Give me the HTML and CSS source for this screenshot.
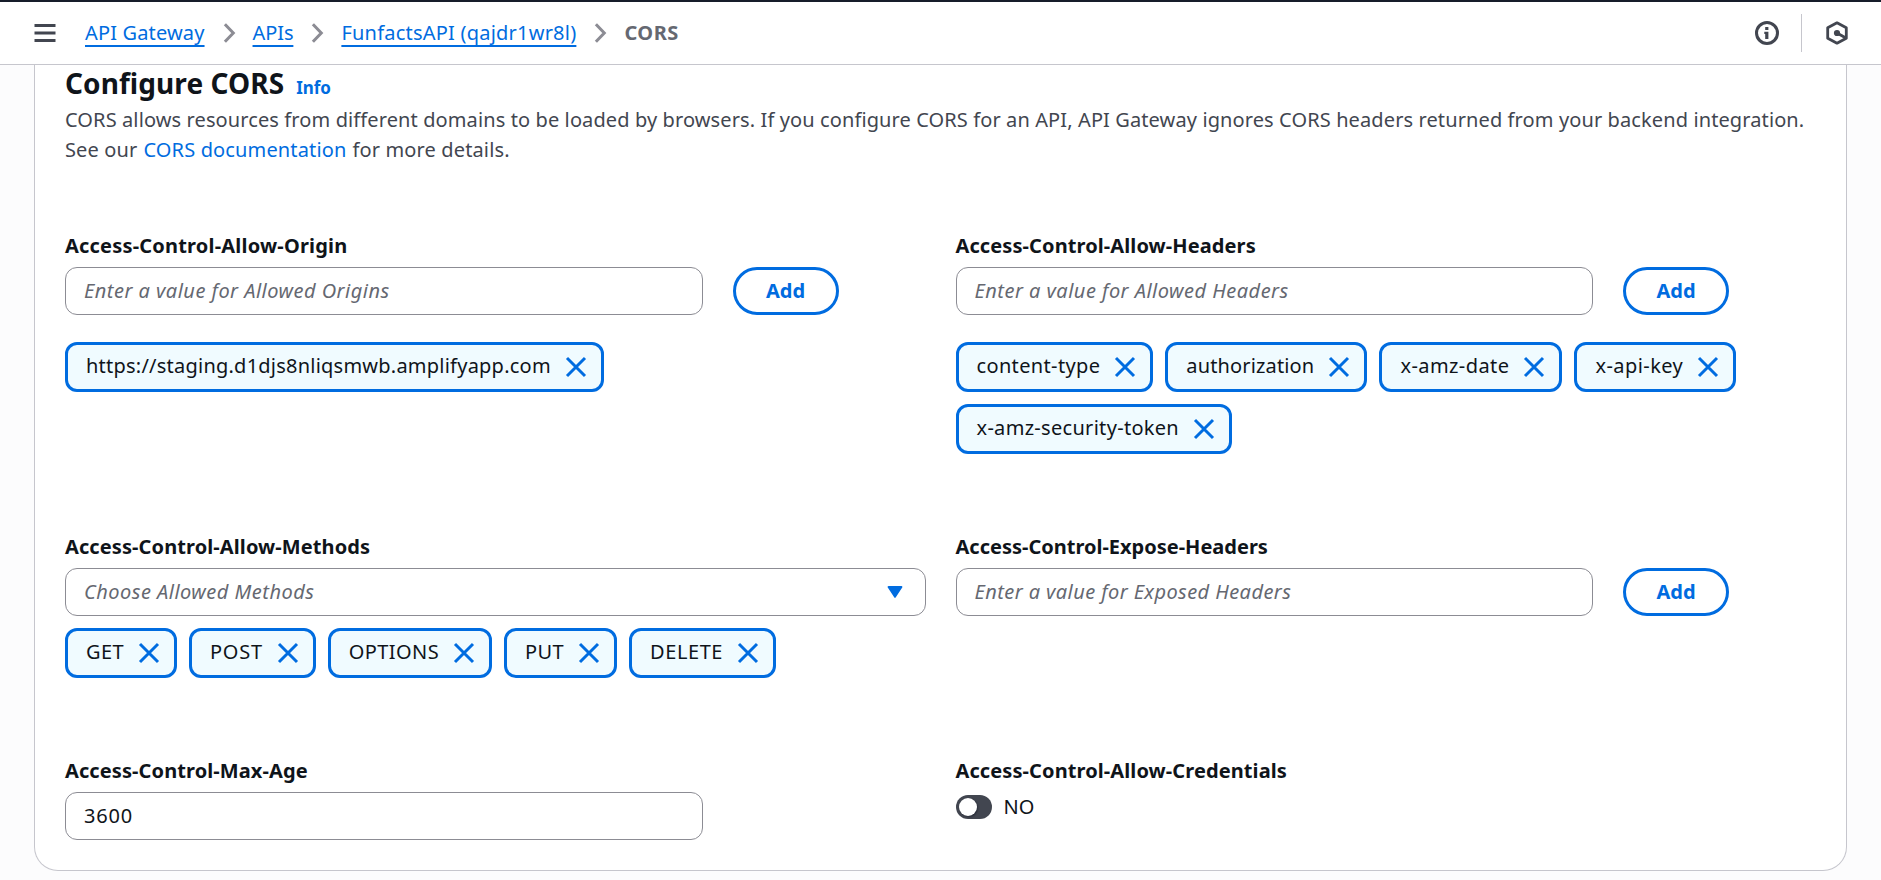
FILE: index.html
```html
<!DOCTYPE html>
<html lang="en">
<head>
<meta charset="utf-8">
<title>CORS - API Gateway</title>
<link rel="stylesheet" href="styles.css">
</head>
<body>
<svg class="sprite" aria-hidden="true">
  <symbol id="close" viewBox="0 0 24 24"><path d="M3 3l18 18M21 3L3 21" fill="none" stroke="currentColor" stroke-width="3"/></symbol>
  <symbol id="chevron" viewBox="0 0 24 24"><path d="M7.9 3.2L16.3 12L7.9 20.8" fill="none" stroke="currentColor" stroke-width="3"/></symbol>
</svg>

<header class="topbar">
  <button class="menu" aria-label="Open navigation">
    <svg class="icon" viewBox="0 0 24 24"><path d="M1.5 4.5h21M1.5 12h21M1.5 19.5h21" stroke="currentColor" stroke-width="3"/></svg>
  </button>
  <nav class="crumbs">
    <a class="crumb crumb-service" href="#">API Gateway</a>
    <svg class="icon sep"><use href="#chevron"/></svg>
    <a class="crumb crumb-list" href="#">APIs</a>
    <svg class="icon sep"><use href="#chevron"/></svg>
    <a class="crumb crumb-api" href="#">FunfactsAPI (qajdr1wr8l)</a>
    <svg class="icon sep"><use href="#chevron"/></svg>
    <span class="crumb-current">CORS</span>
  </nav>
  <div class="tools">
    <svg class="icon" viewBox="0 0 24 24"><circle cx="12" cy="12" r="10.5" fill="none" stroke="currentColor" stroke-width="3"/><path d="M10.2 6h3.2v3h-3.2zM9.3 10.8h4.1V18h-3.2v-5h-.9z" fill="currentColor"/></svg>
    <span class="divider"></span>
    <svg class="icon" viewBox="0 0 24 24"><path d="M12 1.8L21.3 6.8v10.4L12 22.2L2.7 17.2V6.8z" fill="none" stroke="currentColor" stroke-width="2.8" stroke-linejoin="round"/><circle cx="12" cy="12" r="3.1" fill="currentColor"/><path d="M12 12l8.5 4.8" stroke="currentColor" stroke-width="2.8"/></svg>
  </div>
</header>

<main class="card">
  <div class="heading"><h1>Configure CORS</h1><a class="info" href="#">Info</a></div>
  <div class="lead">
    <p>CORS allows resources from different domains to be loaded by browsers. If you configure CORS for an API, API Gateway ignores CORS headers returned from your backend integration.</p>
    <p class="more"><span>See our</span><a href="#">CORS documentation</a><span>for more details.</span></p>
  </div>

  <div class="grid">
    <section>
      <h2 class="l-origin">Access-Control-Allow-Origin</h2>
      <div class="row"><div class="field hint">Enter a value for Allowed Origins</div><button class="add">Add</button></div>
      <div class="tags origins">
        <div class="tag"><span>https://staging.d1djs8nliqsmwb.amplifyapp.com</span><svg class="icon"><use href="#close"/></svg></div>
      </div>
    </section>
    <section>
      <h2>Access-Control-Allow-Headers</h2>
      <div class="row"><div class="field hint">Enter a value for Allowed Headers</div><button class="add">Add</button></div>
      <div class="tags headers">
        <div class="tag"><span>content-type</span><svg class="icon"><use href="#close"/></svg></div>
        <div class="tag"><span>authorization</span><svg class="icon"><use href="#close"/></svg></div>
        <div class="tag"><span>x-amz-date</span><svg class="icon"><use href="#close"/></svg></div>
        <div class="tag"><span>x-api-key</span><svg class="icon"><use href="#close"/></svg></div>
        <div class="tag"><span>x-amz-security-token</span><svg class="icon"><use href="#close"/></svg></div>
      </div>
    </section>
    <section>
      <h2>Access-Control-Allow-Methods</h2>
      <div class="field select hint"><span>Choose Allowed Methods</span><svg class="caret" viewBox="0 0 16 12"><path d="M1.6 1h12.8L8 10.8z" fill="currentColor" stroke="currentColor" stroke-width="2" stroke-linejoin="round"/></svg></div>
      <div class="tags methods">
        <div class="tag"><span>GET</span><svg class="icon"><use href="#close"/></svg></div>
        <div class="tag"><span>POST</span><svg class="icon"><use href="#close"/></svg></div>
        <div class="tag"><span>OPTIONS</span><svg class="icon"><use href="#close"/></svg></div>
        <div class="tag"><span>PUT</span><svg class="icon"><use href="#close"/></svg></div>
        <div class="tag"><span>DELETE</span><svg class="icon"><use href="#close"/></svg></div>
      </div>
    </section>
    <section>
      <h2 class="l-expose">Access-Control-Expose-Headers</h2>
      <div class="row"><div class="field hint hint-expose">Enter a value for Exposed Headers</div><button class="add">Add</button></div>
    </section>
    <section>
      <h2>Access-Control-Max-Age</h2>
      <div class="field value">3600</div>
    </section>
    <section>
      <h2>Access-Control-Allow-Credentials</h2>
      <div class="toggle"><span class="track"><span class="knob"></span></span><span class="state">NO</span></div>
    </section>
  </div>
</main>
</body>
</html>
```

FILE: styles.css
```css
* { box-sizing: border-box; margin: 0; padding: 0; }

body {
  height: 880px;
  overflow: hidden;
  background: #fcfcfd;
  color: #0f141a;
  font: 20px/30px "Noto Sans", "Open Sans", sans-serif;
}

a { color: #006ce0; text-decoration: none; }
button { font: inherit; background: none; border: 0; }
.sprite { display: none; }
.icon { display: block; width: 24px; height: 24px; flex: none; }

.topbar {
  display: flex;
  align-items: center;
  height: 65px;
  padding: 0 32px 1px 33px;
  border-top: 2px solid #161d2a;
  border-bottom: 1px solid #c6c6cd;
  background: #fff;
}
.menu { margin-right: 28px; color: #424650; }
.crumbs { display: flex; align-items: center; gap: 12px; white-space: nowrap; }
.crumb {
  text-decoration: underline 2px;
  text-underline-offset: 5px;
  text-decoration-skip-ink: none;
}
.crumb-service { letter-spacing: 0.15px; }
.crumb-list { letter-spacing: -0.1px; }
.crumb-api { letter-spacing: 0.22px; }
.crumb-current { color: #656871; font-weight: 700; letter-spacing: 0.5px; }
.sep { color: #8c8c94; }
.tools { display: flex; align-items: center; margin-left: auto; color: #424650; }
.divider { width: 1px; height: 38px; margin: 0 23px 0 22px; background: #c6c6cd; }

.card {
  width: 1813px;
  margin-left: 34px;
  padding: 0 30px 30px;
  border: 1px solid #c6c6cd;
  border-top: 0;
  border-radius: 0 0 24px 24px;
  background: #fff;
}
.heading { display: flex; align-items: baseline; gap: 12px; height: 36px; }
h1 { font-size: 28px; line-height: 36px; letter-spacing: 0.08px; }
.info { font-size: 17px; font-weight: 700; letter-spacing: -0.1px; }
.lead { margin-top: 4px; color: #424650; letter-spacing: 0.11px; }
.more { display: flex; gap: 6px; letter-spacing: 0.14px; }

.grid { display: grid; grid-template-columns: 1fr 1fr; gap: 77px 30px; margin-top: 65px; }
h2 { padding-top: 1px; margin-bottom: 6px; font-size: 20px; line-height: 30px; letter-spacing: 0.1px; }
.l-origin { letter-spacing: 0.2px; }
.l-expose { letter-spacing: 0; }

.row { display: flex; gap: 30px; }
.field {
  width: 637.5px;
  height: 48px;
  padding: 8px 18px;
  border: 1px solid #8c8c94;
  border-radius: 12px;
  background: #fff;
}
.hint { color: #656871; font-style: italic; letter-spacing: 0.48px; }
.hint-expose { letter-spacing: 0.42px; }
.value { letter-spacing: 0.8px; }
.select { display: flex; justify-content: space-between; width: auto; padding-right: 22px; }
.caret { width: 16px; height: 12px; margin-top: 9px; color: #006ce0; }
.add {
  width: 106px;
  height: 48px;
  padding-bottom: 1px;
  border: 3px solid #006ce0;
  border-radius: 30px;
  color: #006ce0;
  font-weight: 700;
}

.tags { display: flex; flex-wrap: wrap; gap: 12px; margin-top: 27px; }
.methods { margin-top: 12px; letter-spacing: 0.4px; }
.tag {
  display: flex;
  gap: 13px;
  height: 50px;
  padding: 6px 13px 0 18px;
  border: 3px solid #006ce0;
  border-radius: 12px;
  background: #f0fbff;
}
.tag .icon { margin-top: 4px; color: #006ce0; }
.origins { letter-spacing: 0.23px; }
.headers { letter-spacing: 0.3px; }
.headers .tag:nth-child(1) { letter-spacing: 0.35px; }
.headers .tag:nth-child(2) { letter-spacing: 0.15px; }
.headers .tag:nth-child(3), .headers .tag:nth-child(4) { letter-spacing: 0.43px; }
.methods .tag:nth-child(2) { letter-spacing: 0.75px; }
.methods .tag:nth-child(5) { letter-spacing: 0.56px; }

.toggle { display: flex; align-items: center; gap: 12px; height: 30px; }
.track {
  display: flex;
  align-items: center;
  width: 36px;
  height: 24px;
  padding-left: 3px;
  border-radius: 12px;
  background: #424650;
}
.knob { width: 18px; height: 18px; border-radius: 50%; background: #fff; box-shadow: 1px 1px 2px rgba(0, 7, 22, 0.4); }
```
